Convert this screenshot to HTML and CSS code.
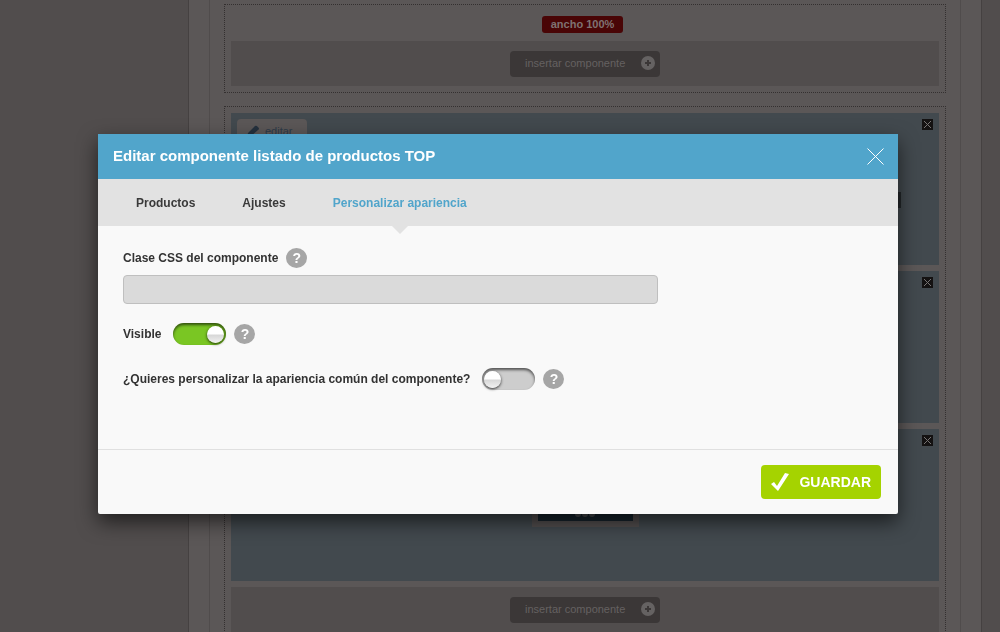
FILE: index.html
```html
<!DOCTYPE html>
<html lang="es">
<head>
  <meta charset="UTF-8" />
  <meta name="viewport" content="width=device-width, initial-scale=1.0" />
  <title>Editar componente</title>
  <link rel="stylesheet" href="styles.css">
</head>
<body>
  <div class="page">
    <main class="content">
      <section class="zone">
        <div class="zone-title"><span class="badge">ancho 100%</span></div>
        <div class="insert-bar">
          <button type="button" class="insert">insertar componente
            <svg width="14" height="14" viewBox="0 0 14 14"><circle cx="7" cy="7" r="7" fill="#656262"/><path d="M7 4v6M4 7h6" stroke="#3b3737" stroke-width="2"/></svg>
          </button>
        </div>
      </section>

      <section class="zone">
        <div class="component">
          <button type="button" class="edit">
            <svg width="13" height="13" viewBox="0 0 13 13"><path d="M1 12l1-4 7-7q1-1 3 1t0 3l-7 6z" fill="#25313e"/></svg>
            editar
          </button>
          <button type="button" class="remove" aria-label="Eliminar"><svg width="11" height="11" viewBox="0 0 11 11"><path d="M2 2l7 7M9 2l-7 7" stroke="#777373"/></svg></button>
          <span class="next"></span>
        </div>
        <div class="component">
          <button type="button" class="remove" aria-label="Eliminar"><svg width="11" height="11" viewBox="0 0 11 11"><path d="M2 2l7 7M9 2l-7 7" stroke="#777373"/></svg></button>
        </div>
        <div class="component">
          <button type="button" class="remove" aria-label="Eliminar"><svg width="11" height="11" viewBox="0 0 11 11"><path d="M2 2l7 7M9 2l-7 7" stroke="#777373"/></svg></button>
          <div class="thumb">
            <svg width="20" height="6" viewBox="0 0 20 6"><g fill="#474b4e"><circle cx="3" cy="3" r="3"/><circle cx="10" cy="3" r="3"/><circle cx="17" cy="3" r="3"/></g></svg>
          </div>
        </div>
        <div class="insert-bar">
          <button type="button" class="insert">insertar componente
            <svg width="14" height="14" viewBox="0 0 14 14"><circle cx="7" cy="7" r="7" fill="#656262"/><path d="M7 4v6M4 7h6" stroke="#3b3737" stroke-width="2"/></svg>
          </button>
        </div>
      </section>
    </main>
  </div>

  <div class="overlay">
    <form class="modal" role="dialog" aria-labelledby="modal-title">
      <header class="modal-header">
        <h1 id="modal-title">Editar componente listado de productos TOP</h1>
        <button type="button" class="close" aria-label="Cerrar">
          <svg width="17" height="17" viewBox="0 0 17 17"><path d="M.5 .5l16 16M16.5 .5l-16 16" stroke="#fff"/></svg>
        </button>
      </header>
      <nav class="tabs">
        <a href="#productos">Productos</a>
        <a href="#ajustes">Ajustes</a>
        <a href="#apariencia" class="active">Personalizar apariencia</a>
      </nav>
      <div class="modal-body">
        <div class="row">
          <label for="css-class">Clase CSS del componente</label>
          <button type="button" class="help">?</button>
        </div>
        <input type="text" id="css-class" class="text-input" />
        <div class="row row-switch">
          <label for="visible">Visible</label>
          <input type="checkbox" id="visible" class="switch" checked />
          <button type="button" class="help">?</button>
        </div>
        <div class="row row-switch">
          <label for="custom">¿Quieres personalizar la apariencia común del componente?</label>
          <input type="checkbox" id="custom" class="switch" />
          <button type="button" class="help">?</button>
        </div>
      </div>
      <footer class="modal-footer">
        <button type="submit" class="save">
          <svg width="18" height="20" viewBox="0 0 18 20"><path d="M0 12l3-2 3 4L14 1l4 1L7 19z" fill="#fff"/></svg>
          GUARDAR
        </button>
      </footer>
    </form>
  </div>
</body>
</html>
```
FILE: styles.css
```css
* {
  box-sizing: border-box;
}

body {
  margin: 0;
  height: 100vh;
  overflow: hidden;
  background: #514d4d;
  font-family: "Liberation Sans", Arial, sans-serif;
}

button {
  border: none;
  padding: 0;
  font-family: inherit;
  cursor: pointer;
}

svg {
  display: block;
  flex: none;
}

/* page behind the dialog */
.page {
  margin: 0 18px 0 188px;
  padding: 0 20px;
  background: #5b5757;
  border: solid #454141;
  border-width: 0 1px;
}

.content {
  padding: 4px 14px 0;
  border: solid #504c4c;
  border-width: 0 1px;
}

.zone {
  display: flex;
  flex-direction: column;
  gap: 6px;
  margin-bottom: 13px;
  padding: 6px;
  border: 1px dotted #343030;
}

.zone-title {
  display: flex;
  justify-content: center;
  padding: 5px 5px 2px 0;
}

.badge {
  padding: 0 9px;
  border-radius: 3px;
  background: #490506;
  color: #7f7272;
  font-size: 11px;
  font-weight: bold;
  line-height: 17px;
}

.insert-bar {
  display: flex;
  justify-content: center;
  padding: 10px 0 9px;
  background: #514d4d;
}

.insert {
  display: flex;
  align-items: center;
  justify-content: space-between;
  width: 150px;
  height: 26px;
  padding: 0 5px 2px 15px;
  border-radius: 4px;
  background: #3b3737;
  color: #656161;
  font-size: 11px;
}

.component {
  position: relative;
  display: flex;
  align-items: center;
  justify-content: center;
  height: 152px;
  background: #42494e;
}

.edit {
  position: absolute;
  top: 6px;
  left: 6px;
  display: flex;
  align-items: center;
  gap: 6px;
  width: 70px;
  height: 24px;
  padding: 0 9px;
  border-radius: 4px;
  background: #5b5757;
  color: #2e3a48;
  font-size: 11px;
}

.remove {
  position: absolute;
  top: 6px;
  right: 6px;
  background: #141212;
}

.next {
  width: 16px;
  height: 16px;
  margin: 22px 38px 0 auto;
  background: #232729;
}

.thumb {
  display: flex;
  align-items: flex-end;
  justify-content: center;
  width: 107px;
  height: 44px;
  padding-bottom: 4px;
  border: 6px solid #524e4e;
  background: #17242d;
}

/* dialog */
.overlay {
  position: fixed;
  inset: 0;
  display: flex;
  justify-content: center;
  align-items: flex-start;
  padding: 134px 4px 0 0;
}

.modal {
  width: 800px;
  max-width: 100%;
  border-radius: 0 0 2px 2px;
  background: #f9f9f9;
  box-shadow: 0 8px 20px rgba(0, 0, 0, 0.6);
}

.modal-header {
  display: flex;
  align-items: center;
  justify-content: space-between;
  height: 45px;
  padding: 0 14px 0 15px;
  background: #51a5cb;
  color: #fff;
}

.modal-header h1 {
  margin: 0;
  padding-bottom: 2px;
  font-size: 15px;
}

.close {
  background: none;
}

.tabs {
  display: flex;
  gap: 47px;
  padding: 1px 38px 0;
  background: #e2e2e2;
}

.tabs a {
  position: relative;
  color: #3a3a3a;
  font-size: 12px;
  font-weight: bold;
  line-height: 46px;
  text-decoration: none;
}

.tabs .active {
  color: #51a5cb;
}

.tabs .active::after {
  content: "";
  position: absolute;
  top: 100%;
  left: 50%;
  margin-left: -8px;
  border: 8px solid transparent;
  border-top-color: #e2e2e2;
  border-bottom: none;
}

.modal-body {
  padding: 21px 25px 36px;
}

.row {
  display: flex;
  align-items: center;
  gap: 8px;
  min-height: 22px;
}

.row label {
  color: #333;
  font-size: 12px;
  font-weight: bold;
}

.row-switch {
  margin-bottom: 23px;
}

.row-switch label {
  margin-right: 4px;
}

.help {
  width: 21px;
  height: 20px;
  border-radius: 50%;
  background: #a6a6a6;
  color: #fff;
  font-size: 14px;
  font-weight: bold;
  line-height: 20px;
}

.text-input {
  display: block;
  width: 535px;
  max-width: 100%;
  height: 29px;
  margin: 6px 0 19px;
  padding: 0 8px;
  border: 1px solid #bfbfbf;
  border-radius: 4px;
  background: #dadada;
}

.switch {
  appearance: none;
  display: flex;
  align-items: center;
  width: 53px;
  height: 22px;
  margin: 0;
  padding: 0 2px;
  border-radius: 11px;
  background: #cdcdcd;
  box-shadow: inset 0 2px 3px rgba(0, 0, 0, 0.6);
}

.switch::before {
  content: "";
  width: 17px;
  height: 17px;
  border-radius: 50%;
  background: linear-gradient(#fff 45%, #d8d8d8 55%, #f2f2f2);
  box-shadow: 0 1px 3px rgba(0, 0, 0, 0.8);
}

.switch:checked {
  justify-content: flex-end;
  background: #7ac623;
}

.modal-footer {
  display: flex;
  justify-content: flex-end;
  padding: 15px 17px;
  border-top: 1px solid #e0e0e0;
}

.save {
  display: flex;
  align-items: center;
  gap: 10px;
  height: 34px;
  padding: 0 10px;
  border-radius: 4px;
  background: #a5d300;
  color: #fff;
  font-size: 14px;
  font-weight: bold;
}
```
